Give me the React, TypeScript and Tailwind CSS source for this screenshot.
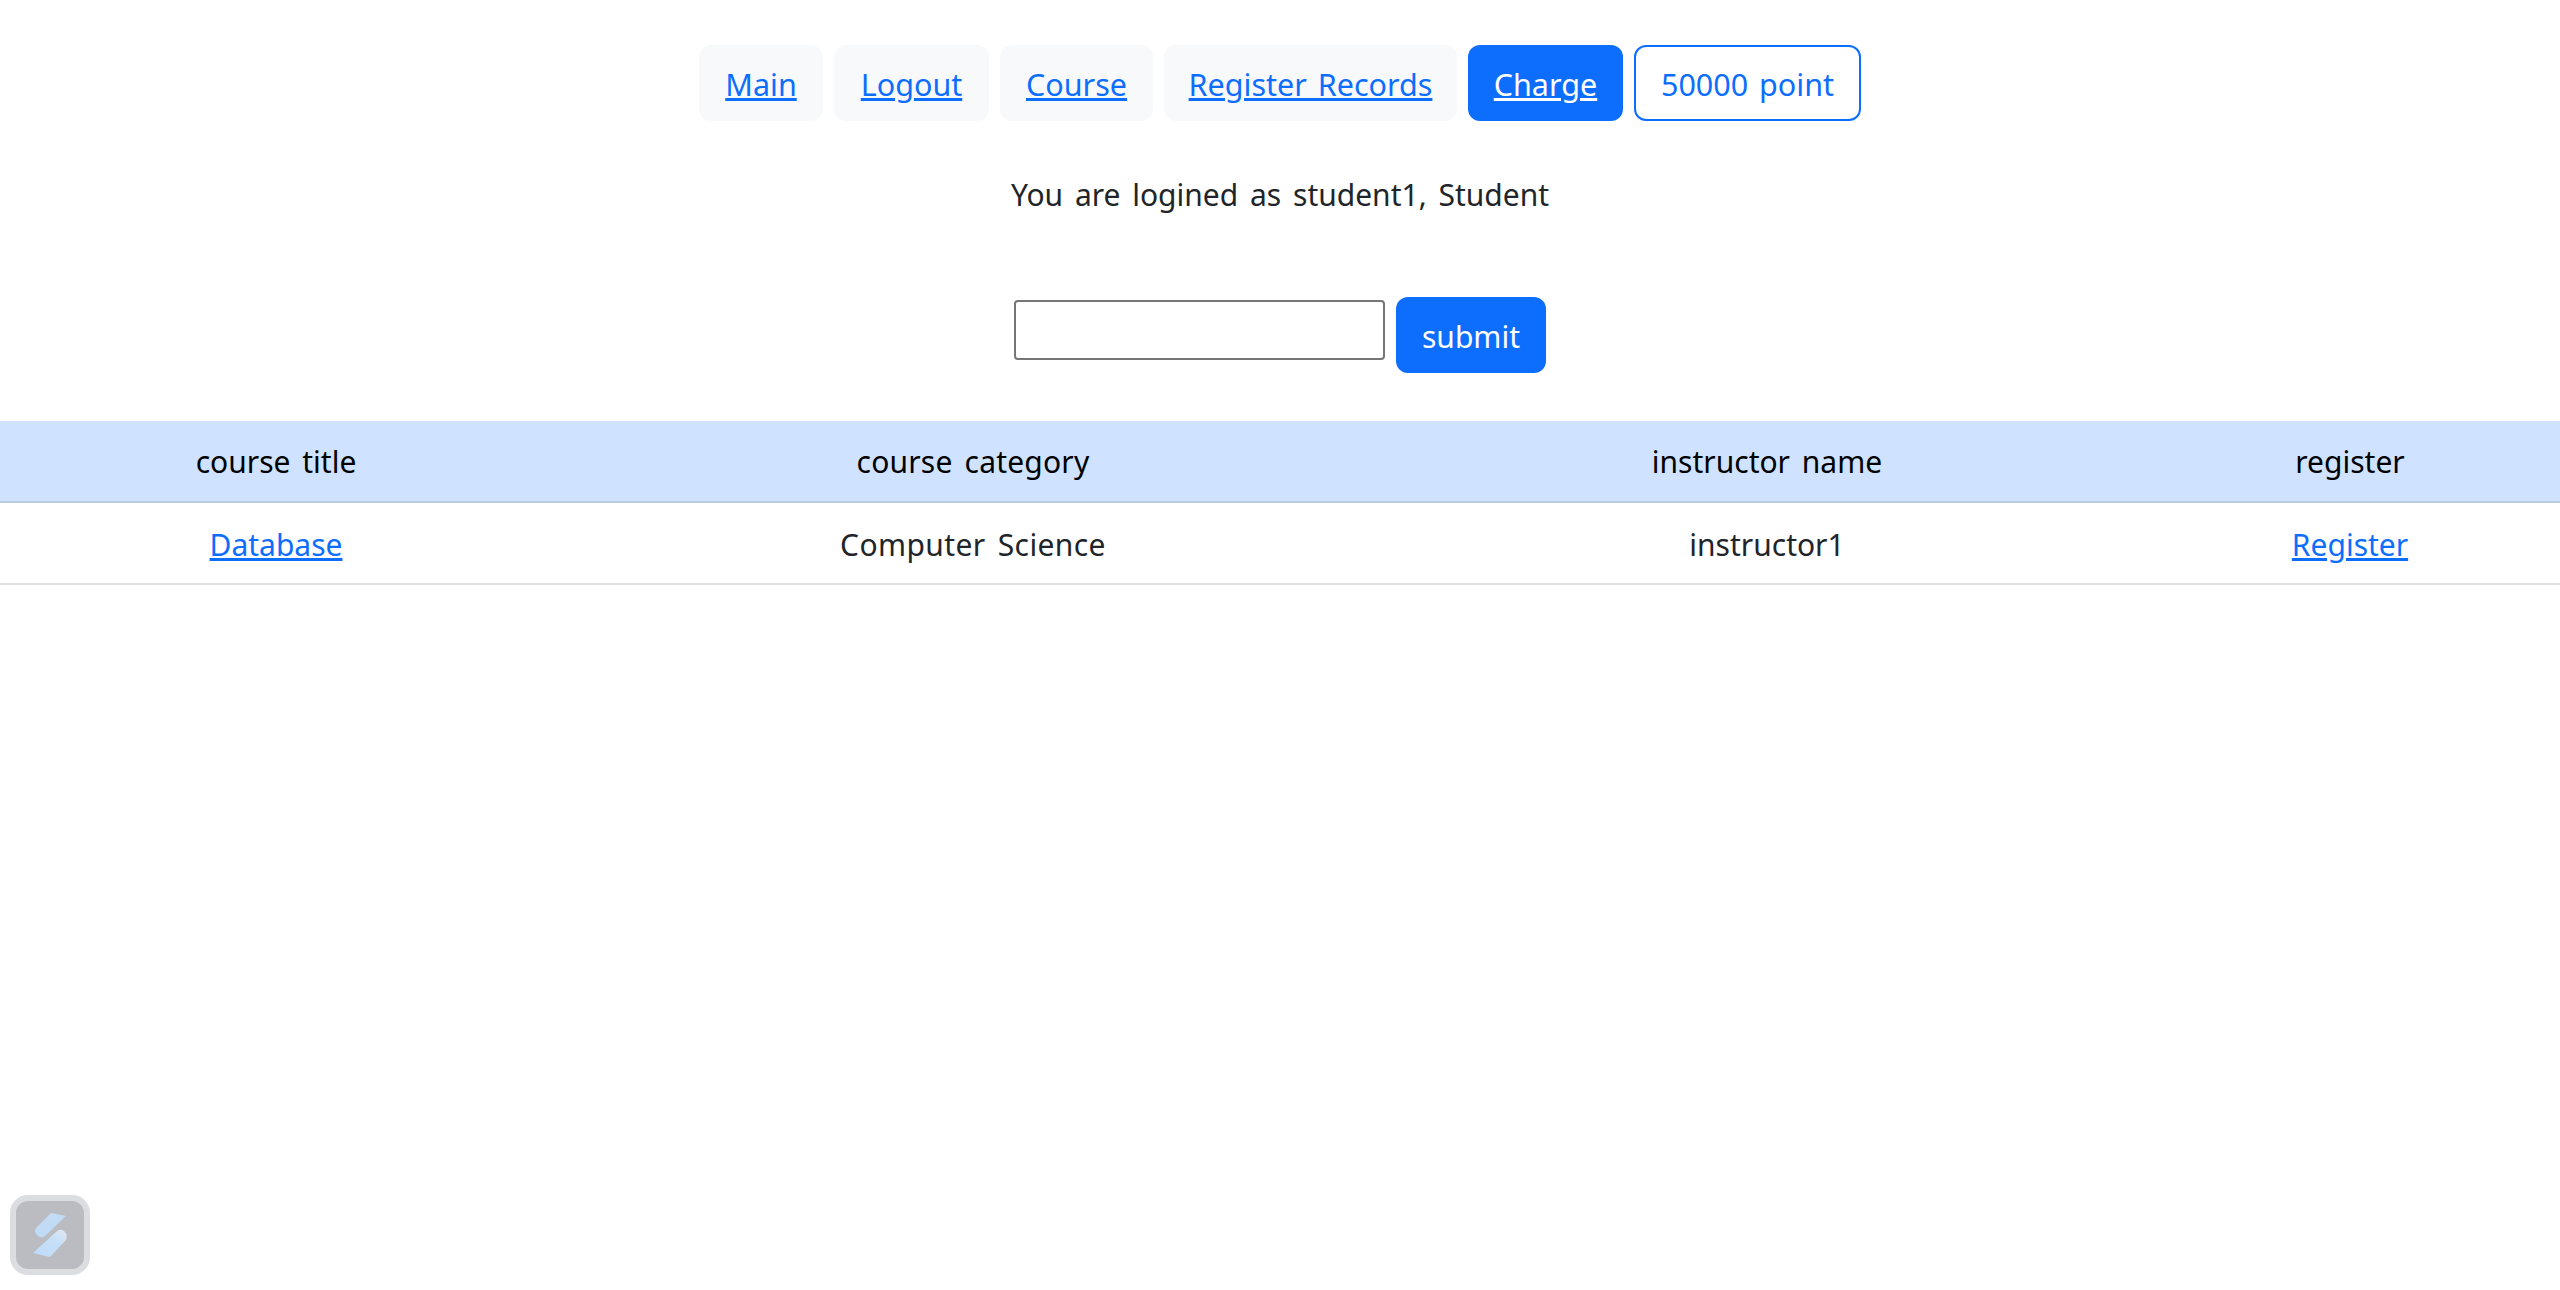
function NavLink({ children, w }: { children: string; w: string }) {
  return (
    <a href="#" className={`flex h-[76px] items-center justify-center rounded-[12px] bg-[#f8f9fa] pt-[2px] text-[#0d6efd] underline ${w}`}>
      {children}
    </a>
  );
}

export default function App() {
  const th = "h-[82px] border-b-2 border-[#bacbe6] bg-[#cfe2ff] pt-[1px] font-normal text-black";
  const td = "h-[82px] border-b-2 border-[#dee2e6] pt-[2px]";
  return (
    <div className="relative h-[1290px] w-full overflow-hidden bg-white font-['Noto_Sans','Liberation_Sans',sans-serif] text-[30px] leading-[45px] text-[#212529] [word-spacing:4px]">
      <nav className="flex justify-center gap-[11px] pt-[45px] text-[30.5px] [word-spacing:3px]">
        <NavLink w="w-[124px]">Main</NavLink>
        <NavLink w="w-[155px]">Logout</NavLink>
        <NavLink w="w-[153px]">Course</NavLink>
        <NavLink w="w-[293px]">Register Records</NavLink>
        <a href="#" className="flex h-[76px] w-[155px] items-center justify-center rounded-[12px] bg-[#0d6efd] pt-[2px] text-white underline">Charge</a>
        <div className="flex h-[76px] w-[227px] items-center justify-center rounded-[12px] border-2 border-[#0d6efd] pt-[2px] text-[#0d6efd]">50000 point</div>
      </nav>
      <p className="mt-[51px] text-center">You are logined as student1, Student</p>
      <form className="mt-[80px] flex justify-center gap-[11px]">
        <input className="mt-[3px] h-[60px] w-[371px] rounded-[4px] border-2 border-[#767676] bg-white" />
        <button type="button" className="h-[76px] w-[150px] rounded-[12px] bg-[#0d6efd] pt-[3px] text-white">submit</button>
      </form>
      <table className="mt-[48px] w-full table-fixed border-separate border-spacing-0 text-center">
        <thead>
          <tr>
            <th className={`w-[552px] ${th}`}>course title</th>
            <th className={`w-[842px] tracking-[0.2px] ${th}`}>course category</th>
            <th className={`w-[746px] ${th}`}>instructor name</th>
            <th className={th}>register</th>
          </tr>
        </thead>
        <tbody>
          <tr>
            <td className={td}><a href="#" className="text-[#0d6efd] underline">Database</a></td>
            <td className={`tracking-[0.4px] ${td}`}>Computer Science</td>
            <td className={td}>instructor1</td>
            <td className={td}><a href="#" className="text-[#0d6efd] underline">Register</a></td>
          </tr>
        </tbody>
      </table>
      <div className="fixed bottom-[15px] left-[10px] h-[80px] w-[80px] rounded-[18px] border-[6px] border-[#dcdde1] bg-[#bbbcc1]">
        <svg width="68" height="68" viewBox="6 6 68 68" className="block">
          <defs>
            <linearGradient id="a" x1="0.2" y1="0" x2="0.6" y2="1">
              <stop offset="0" stopColor="#c6dcf3" />
              <stop offset="1" stopColor="#bcdaf7" />
            </linearGradient>
            <linearGradient id="b" x1="0.9" y1="0.1" x2="0.2" y2="1">
              <stop offset="0" stopColor="#dbe6f1" />
              <stop offset="0.35" stopColor="#c6dff8" />
              <stop offset="1" stopColor="#bfdcf8" />
            </linearGradient>
          </defs>
          <path d="M41 18 L56 21 L35 41 Q31 44 27 40 Q23 36 27 32 Z" fill="url(#a)" />
          <path d="M46 37 Q50 33 54 36 Q59 41 55 46 L40 62 L23 58 Z" fill="url(#b)" />
        </svg>
      </div>
    </div>
  );
}
